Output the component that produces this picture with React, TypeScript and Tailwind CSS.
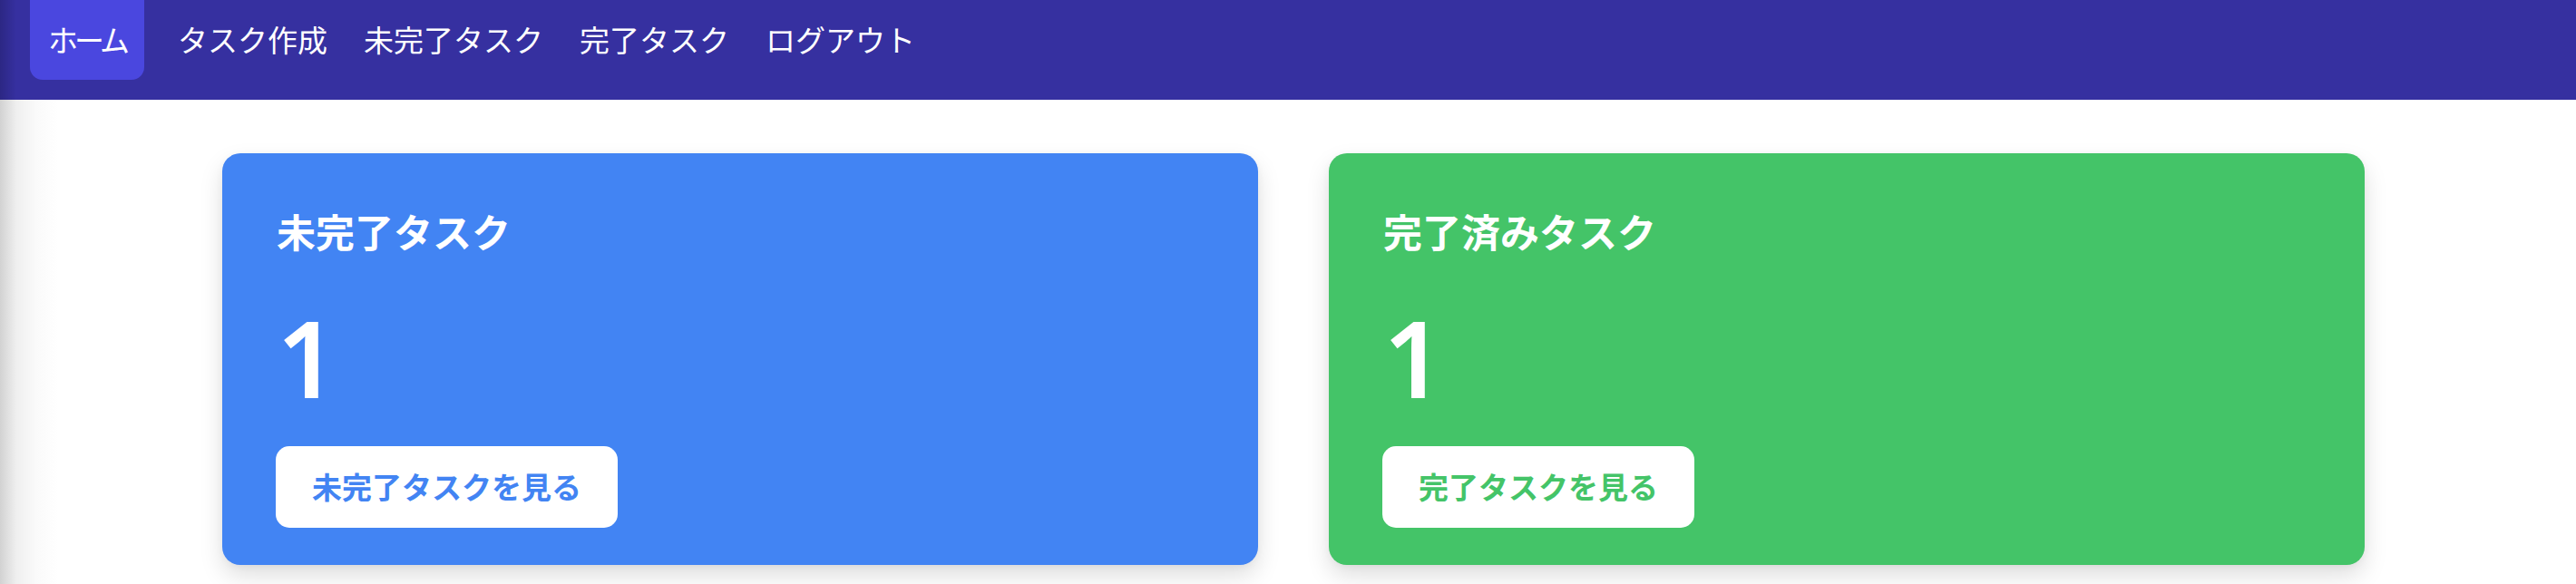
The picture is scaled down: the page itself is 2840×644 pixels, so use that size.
import clsx from 'clsx';

const NAV_ITEMS = [
  { key: 'home', label: 'ホーム', active: true },
  { key: 'create', label: 'タスク作成' },
  { key: 'todo', label: '未完了タスク' },
  { key: 'done', label: '完了タスク' },
  { key: 'logout', label: 'ログアウト' },
];

const CARDS = [
  {
    key: 'todo',
    title: '未完了タスク',
    count: 1,
    button: '未完了タスクを見る',
    bg: 'bg-[#4284f3]',
    text: 'text-[#4284f3]',
  },
  {
    key: 'done',
    title: '完了済みタスク',
    count: 1,
    button: '完了タスクを見る',
    bg: 'bg-[#44c468]',
    text: 'text-[#44c468]',
  },
];

export default function App() {
  return (
    <div
      className={clsx(
        'min-h-[644px] w-full',
        'bg-[linear-gradient(to_right,#d2d2d2,#efefef_18px,#fafafa_40px,#ffffff_64px)]',
        "font-['Noto_Sans','Noto_Sans_CJK_JP',sans-serif]"
      )}
    >
      <nav
        className={clsx(
          'h-[110px] flex items-start pl-[33px]',
          'bg-[linear-gradient(to_right,#2c2784,#3630a0_18px)]',
          'text-white text-[33px]'
        )}
      >
        {NAV_ITEMS.map((item, i) => (
          <a
            key={item.key}
            href="#"
            className={clsx(
              'h-[88px] flex items-center leading-none',
              item.active
                ? 'bg-[#4a47df] rounded-b-[14px] px-[20px] tracking-[-4px]'
                : 'px-[20px]',
              i === 1 && 'ml-[17px]'
            )}
          >
            {item.label}
          </a>
        ))}
      </nav>

      <main className="pt-[59px] pl-[245px] flex gap-[78px]">
        {CARDS.map((card) => (
          <div
            key={card.key}
            className={clsx(
              'w-[1142px] h-[454px] rounded-[20px]',
              'pt-[59px] pl-[60px] pb-[41px]',
              'shadow-[0_12px_26px_rgba(0,0,0,0.13),0_2px_8px_rgba(0,0,0,0.04)]',
              'text-white',
              card.bg
            )}
          >
            <h2 className="text-[43px] leading-[57px] font-bold">
              {card.title}
            </h2>
            <p className="mt-[50px] text-[117px] leading-none font-semibold">
              {card.count}
            </p>
            <button
              className={clsx(
                'mt-[40px] -ml-[1px] h-[90px] px-[40px]',
                'bg-white rounded-[15px]',
                'text-[33px] font-semibold leading-none',
                card.text
              )}
            >
              {card.button}
            </button>
          </div>
        ))}
      </main>
    </div>
  );
}
